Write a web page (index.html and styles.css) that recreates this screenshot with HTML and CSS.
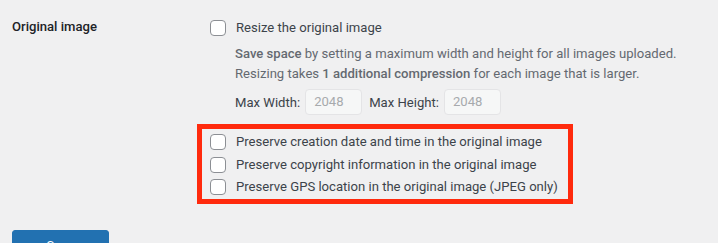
FILE: index.html
```html
<!DOCTYPE html>
<html lang="en">
<head>
  <meta charset="UTF-8">
  <meta name="viewport" content="width=device-width, initial-scale=1.0">
  <title>Settings</title>
  <link rel="stylesheet" href="styles.css">
</head>
<body>
  <form class="settings">
    <div class="formRow">
      <div class="rowLabel">Original image</div>
      <div class="rowField">
        <label class="check">
          <span class="box"></span>
          <span>Resize the original image</span>
        </label>
        <p class="desc">
          <b>Save space</b> by setting a maximum width and height for all images uploaded.<br>
          Resizing takes <b>1 additional compression</b> for each image that is larger.
        </p>
        <div class="sizes">
          <span>Max Width:</span>
          <span class="num">2048</span>
          <span>Max Height:</span>
          <span class="num">2048</span>
        </div>
        <div class="highlight">
          <label class="check">
            <span class="box"></span>
            <span>Preserve creation date and time in the original image</span>
          </label>
          <label class="check">
            <span class="box"></span>
            <span>Preserve copyright information in the original image</span>
          </label>
          <label class="check">
            <span class="box"></span>
            <span>Preserve GPS location in the original image (JPEG only)</span>
          </label>
        </div>
      </div>
    </div>
    <div class="submit">
      <button type="button" class="saveBtn">Save Changes</button>
    </div>
  </form>
</body>
</html>
```

FILE: styles.css
```css
html, body{
  margin: 0;
  background-color: #f0f0f1;
}
.settings{
  font-family: Roboto, "Liberation Sans", sans-serif;
  font-size: 13.1px;
  color: #3c434a;
  padding: 0 0 0 12px;
}
.formRow{
  display: flex;
  flex-direction: row;
  padding-top: 17px;
}
.rowLabel{
  width: 198px;
  flex-shrink: 0;
  font-weight: 500;
  color: #1d2327;
  line-height: 20px;
}
.rowField{
  display: flex;
  flex-direction: column;
  align-items: flex-start;
}
.check{
  display: flex;
  align-items: center;
  gap: 10px;
  line-height: 22px;
}
.check .box{
  width: 14px;
  height: 14px;
  border: 1px solid #8c8f94;
  border-radius: 4px;
  background-color: #fff;
  flex-shrink: 0;
}
.desc{
  margin: 5px 0 0 25px;
  color: #646970;
  line-height: 20px;
}
.desc b{
  font-weight: 500;
}
.sizes{
  display: flex;
  align-items: center;
  gap: 5px;
  margin: 5px 0 0 25px;
}
.sizes .num{
  width: 47px;
  height: 24px;
  line-height: 24px;
  padding: 0 0 0 8px;
  border: 1px solid #e4e4e6;
  border-radius: 4px;
  background-color: #f6f7f7;
  color: #a7aaad;
  margin-right: 2px;
  overflow: hidden;
}
.highlight{
  margin: 9px 0 0 -13px;
  border: 5px solid #ff2a0d;
  padding: 2px 10px 0 8px;
  display: flex;
  flex-direction: column;
}
.highlight .check{
  line-height: 22.5px;
}
.submit{
  margin-top: 26px;
}
.saveBtn{
  font-family: inherit;
  font-size: 13px;
  color: #fff;
  background-color: #2271b1;
  border: 1px solid #2271b1;
  border-radius: 3px;
  padding: 0 10px;
  height: 32px;
  line-height: 30px;
  width: 97px;
}
```
